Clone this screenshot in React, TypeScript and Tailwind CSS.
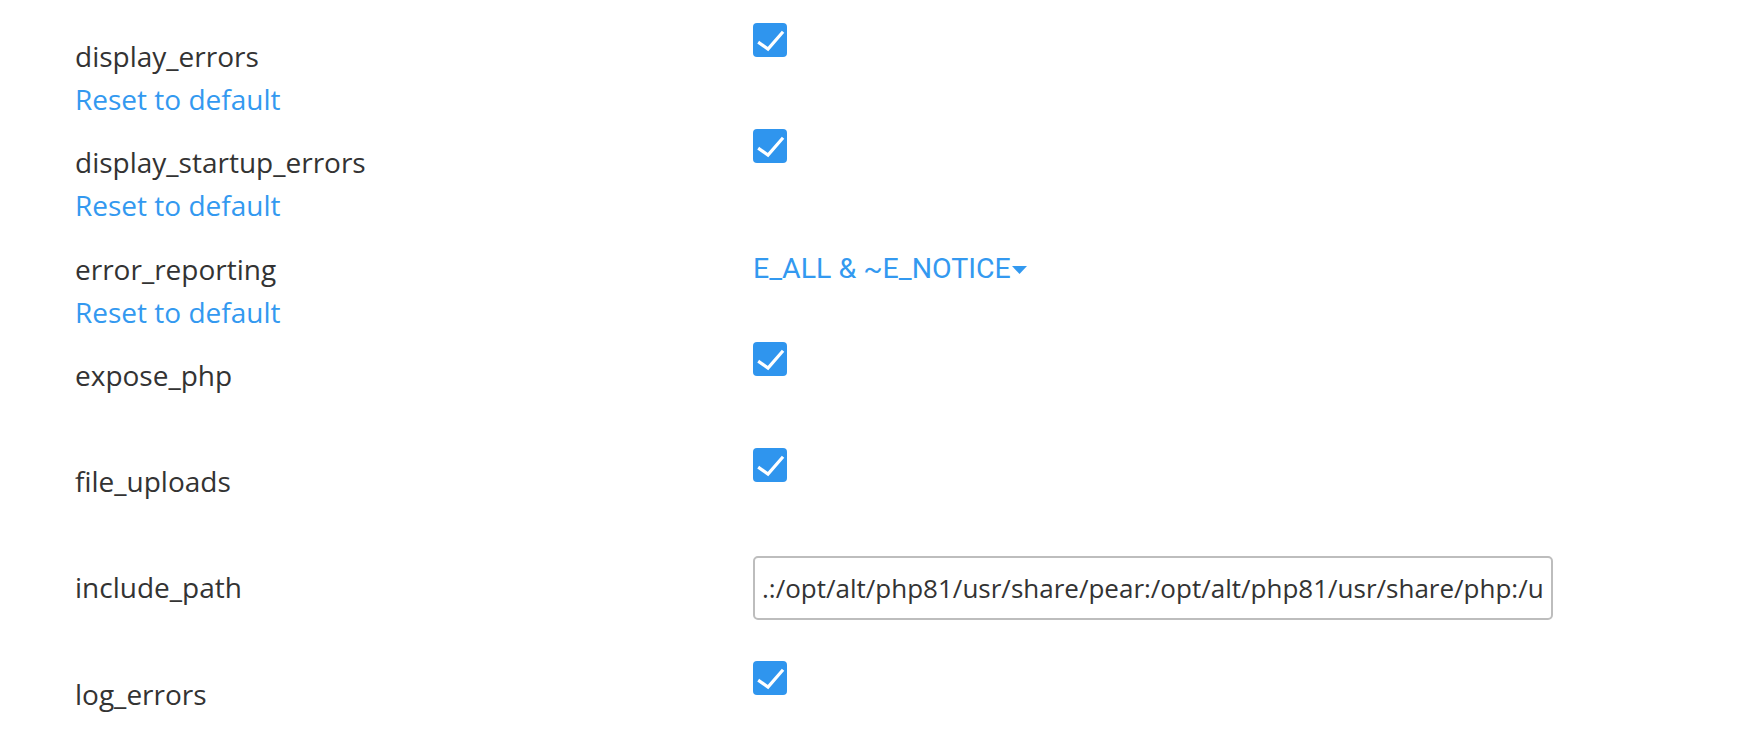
import React from "react";

function Check() {
  return (
    <div className="w-[34px] h-[34px] rounded-[4px] bg-[#2f95ee] flex items-center justify-center">
      <svg width="34" height="34" viewBox="0 0 34 34" fill="none">
        <path d="M6.5 20 L15 26 L29 10" stroke="#fff" strokeWidth="3.2" strokeLinecap="square" strokeLinejoin="miter" />
      </svg>
    </div>
  );
}

type Row = {
  name: string;
  reset?: boolean;
  kind: "check" | "select" | "input";
};

const rows: Row[] = [
  { name: "display_errors", reset: true, kind: "check" },
  { name: "display_startup_errors", reset: true, kind: "check" },
  { name: "error_reporting", reset: true, kind: "select" },
  { name: "expose_php", kind: "check" },
  { name: "file_uploads", kind: "check" },
  { name: "include_path", kind: "input" },
  { name: "log_errors", kind: "check" },
];

export default function App() {
  return (
    <div className="w-[1741px] h-[749px] bg-white overflow-hidden font-['Open_Sans',sans-serif] text-[#333]">
      <div className="pl-[75px]">
        {rows.map((r) => (
          <div key={r.name} className="flex items-start h-[106.3px]">
            <div className="w-[678px] pt-[35px] text-[28px] leading-[43px]">
              <div>{r.name}</div>
              {r.reset && <div className="text-[#3399f0]">Reset to default</div>}
            </div>
            <div>
              {r.kind === "check" && (
                <div className="pt-[23px]">
                  <Check />
                </div>
              )}
              {r.kind === "select" && (
                <div className="pt-[34.5px] flex items-center text-[#3399f0] font-['Roboto',sans-serif] text-[28.5px] leading-[43px]">
                  <span>E_ALL &amp; ~E_NOTICE</span>
                  <svg width="15" height="8" viewBox="0 0 15 8" className="ml-[1px] mt-[3px]">
                    <path d="M0 0 L15 0 L7.5 8 Z" fill="#3399f0" />
                  </svg>
                </div>
              )}
              {r.kind === "input" && (
                <div className="pt-[25px]">
                  <input
                    readOnly
                    value=".:/opt/alt/php81/usr/share/pear:/opt/alt/php81/usr/share/php:/usr/share/pear:/usr/share/php"
                    className="w-[800px] h-[64px] border-2 border-[#bdbdbd] rounded-[5px] px-[7px] text-[26px] text-[#333] font-['Open_Sans',sans-serif] outline-none bg-white"
                  />
                </div>
              )}
            </div>
          </div>
        ))}
      </div>
    </div>
  );
}
